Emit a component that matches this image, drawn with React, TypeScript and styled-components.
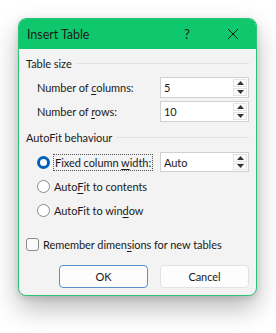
import React from "react";
import styled, { createGlobalStyle } from "styled-components";

const GlobalStyle = createGlobalStyle`
  html, body {
    margin: 0;
    padding: 0;
    background: #ffffff;
  }
  body {
    font-family: Lato, "Noto Sans", sans-serif;
    font-size: 11px;
    letter-spacing: -0.05px;
    color: #1a1a1a;
    white-space: nowrap;
  }
`;

const Page = styled.div`
  width: 276px;
  height: 333px;
  padding: 18px 19px 0 18px;
  box-sizing: border-box;
`;

const Dialog = styled.div`
  width: 239px;
  height: 278px;
  box-sizing: border-box;
  border: 1px solid #2cc574;
  border-radius: 8px;
  background: #f3f3f3;
  overflow: hidden;
  display: flex;
  flex-direction: column;
  box-shadow: 0 12px 26px rgba(0, 0, 0, 0.28), 0 2px 6px rgba(0, 0, 0, 0.12);
`;

const TitleBar = styled.div`
  height: 30px;
  background: #0fc76c;
  display: flex;
  align-items: center;
  padding-left: 8px;
  font-size: 12.5px;
  color: #1b1b1b;
`;

const Title = styled.div`
  flex: 1;
`;

const TitleButton = styled.div`
  width: 46px;
  height: 30px;
  display: flex;
  align-items: center;
  justify-content: center;
  font-size: 13px;
`;

const Body = styled.div`
  padding: 6px 7px 0 7px;
  display: flex;
  flex-direction: column;
`;

const SectionHeader = styled.div<{ $mt: number }>`
  display: flex;
  align-items: center;
  gap: 5px;
  height: 16px;
  margin-top: ${(p) => p.$mt}px;
  &::after {
    content: "";
    flex: 1;
    height: 1px;
    background: #e0e0e0;
  }
`;

const FieldRow = styled.div<{ $mt: number }>`
  display: flex;
  align-items: center;
  justify-content: space-between;
  margin-top: ${(p) => p.$mt}px;
  padding-left: 11px;
`;

const SpinBox = styled.div<{ $h: number }>`
  width: 89px;
  height: ${(p) => p.$h}px;
  box-sizing: border-box;
  border: 1px solid #d0d0d0;
  background: #ffffff;
  display: flex;
`;

const SpinValue = styled.div`
  flex: 1;
  display: flex;
  align-items: center;
  padding-left: 3px;
`;

const Spinner = styled.div`
  width: 16px;
  display: flex;
  flex-direction: column;
  gap: 1px;
  padding: 1px;
  box-sizing: border-box;
`;

const SpinButton = styled.div`
  flex: 1;
  border: 1px solid #e3e3e3;
  background: #fbfbfb;
  display: flex;
  align-items: center;
  justify-content: center;
`;

const Radio = styled.div<{ $checked?: boolean }>`
  width: 13px;
  height: 13px;
  border-radius: 50%;
  box-sizing: border-box;
  border: ${(p) => (p.$checked ? "3.5px solid #005fb8" : "1px solid #8a8a8a")};
  background: #ffffff;
  flex-shrink: 0;
`;

const OptionRow = styled.div<{ $mt: number; $indent: number }>`
  display: flex;
  align-items: center;
  gap: 4px;
  height: 20px;
  margin-top: ${(p) => p.$mt}px;
  padding-left: ${(p) => p.$indent}px;
`;

const FocusLabel = styled.span`
  outline: 1px dotted #555;
  padding: 1px 1px;
`;

const Checkbox = styled.div`
  width: 13px;
  height: 13px;
  box-sizing: border-box;
  border: 1px solid #8a8a8a;
  border-radius: 3px;
  background: #fafafa;
  flex-shrink: 0;
`;

const CheckRow = styled.div`
  display: flex;
  align-items: center;
  gap: 4px;
  height: 14px;
  margin-top: 17px;
`;

const ButtonRow = styled.div`
  display: flex;
  justify-content: flex-end;
  gap: 12px;
  margin-top: 14px;
`;

const Button = styled.div<{ $primary?: boolean }>`
  width: 89px;
  height: 23px;
  box-sizing: border-box;
  border: 1px solid ${(p) => (p.$primary ? "#5a8fc8" : "#e2e2e2")};
  border-radius: 4px;
  background: #fdfdfd;
  display: flex;
  align-items: center;
  justify-content: center;
`;

const U = styled.span`
  text-decoration: underline;
  text-underline-offset: 2px;
`;

const Arrow = ({ down }: { down?: boolean }) => (
  <svg width="7" height="4" viewBox="0 0 7 4">
    <path d={down ? "M0 0 H7 L3.5 4 Z" : "M0 4 H7 L3.5 0 Z"} fill="#333" />
  </svg>
);

const Spin = ({ value, h }: { value: string; h: number }) => (
  <SpinBox $h={h}>
    <SpinValue>{value}</SpinValue>
    <Spinner>
      <SpinButton>
        <Arrow />
      </SpinButton>
      <SpinButton>
        <Arrow down />
      </SpinButton>
    </Spinner>
  </SpinBox>
);

export default function App() {
  return (
    <>
      <GlobalStyle />
      <Page>
        <Dialog>
          <TitleBar>
            <Title>Insert Table</Title>
            <TitleButton>?</TitleButton>
            <TitleButton>
              <svg width="12" height="12" viewBox="0 0 12 12">
                <path d="M1 1 L11 11 M11 1 L1 11" stroke="#1b1b1b" strokeWidth="1" />
              </svg>
            </TitleButton>
          </TitleBar>
          <Body>
            <SectionHeader $mt={0}>Table size</SectionHeader>
            <FieldRow $mt={6}>
              <span>
                Number of <U>c</U>olumns:
              </span>
              <Spin value="5" h={21} />
            </FieldRow>
            <FieldRow $mt={3}>
              <span>
                Number of <U>r</U>ows:
              </span>
              <Spin value="10" h={21} />
            </FieldRow>
            <SectionHeader $mt={7}>AutoFit behaviour</SectionHeader>
            <FieldRow $mt={7}>
              <OptionRow $mt={0} $indent={0}>
                <Radio $checked />
                <FocusLabel>
                  Fixed column <U>w</U>idth:
                </FocusLabel>
              </OptionRow>
              <Spin value="Auto" h={20} />
            </FieldRow>
            <OptionRow $mt={4} $indent={11}>
              <Radio />
              <span>
                Auto<U>F</U>it to contents
              </span>
            </OptionRow>
            <OptionRow $mt={4} $indent={11}>
              <Radio />
              <span>
                AutoFit to win<U>d</U>ow
              </span>
            </OptionRow>
            <CheckRow>
              <Checkbox />
              <span>
                Remember dimen<U>s</U>ions for new tables
              </span>
            </CheckRow>
            <ButtonRow>
              <Button $primary>OK</Button>
              <Button>Cancel</Button>
            </ButtonRow>
          </Body>
        </Dialog>
      </Page>
    </>
  );
}
